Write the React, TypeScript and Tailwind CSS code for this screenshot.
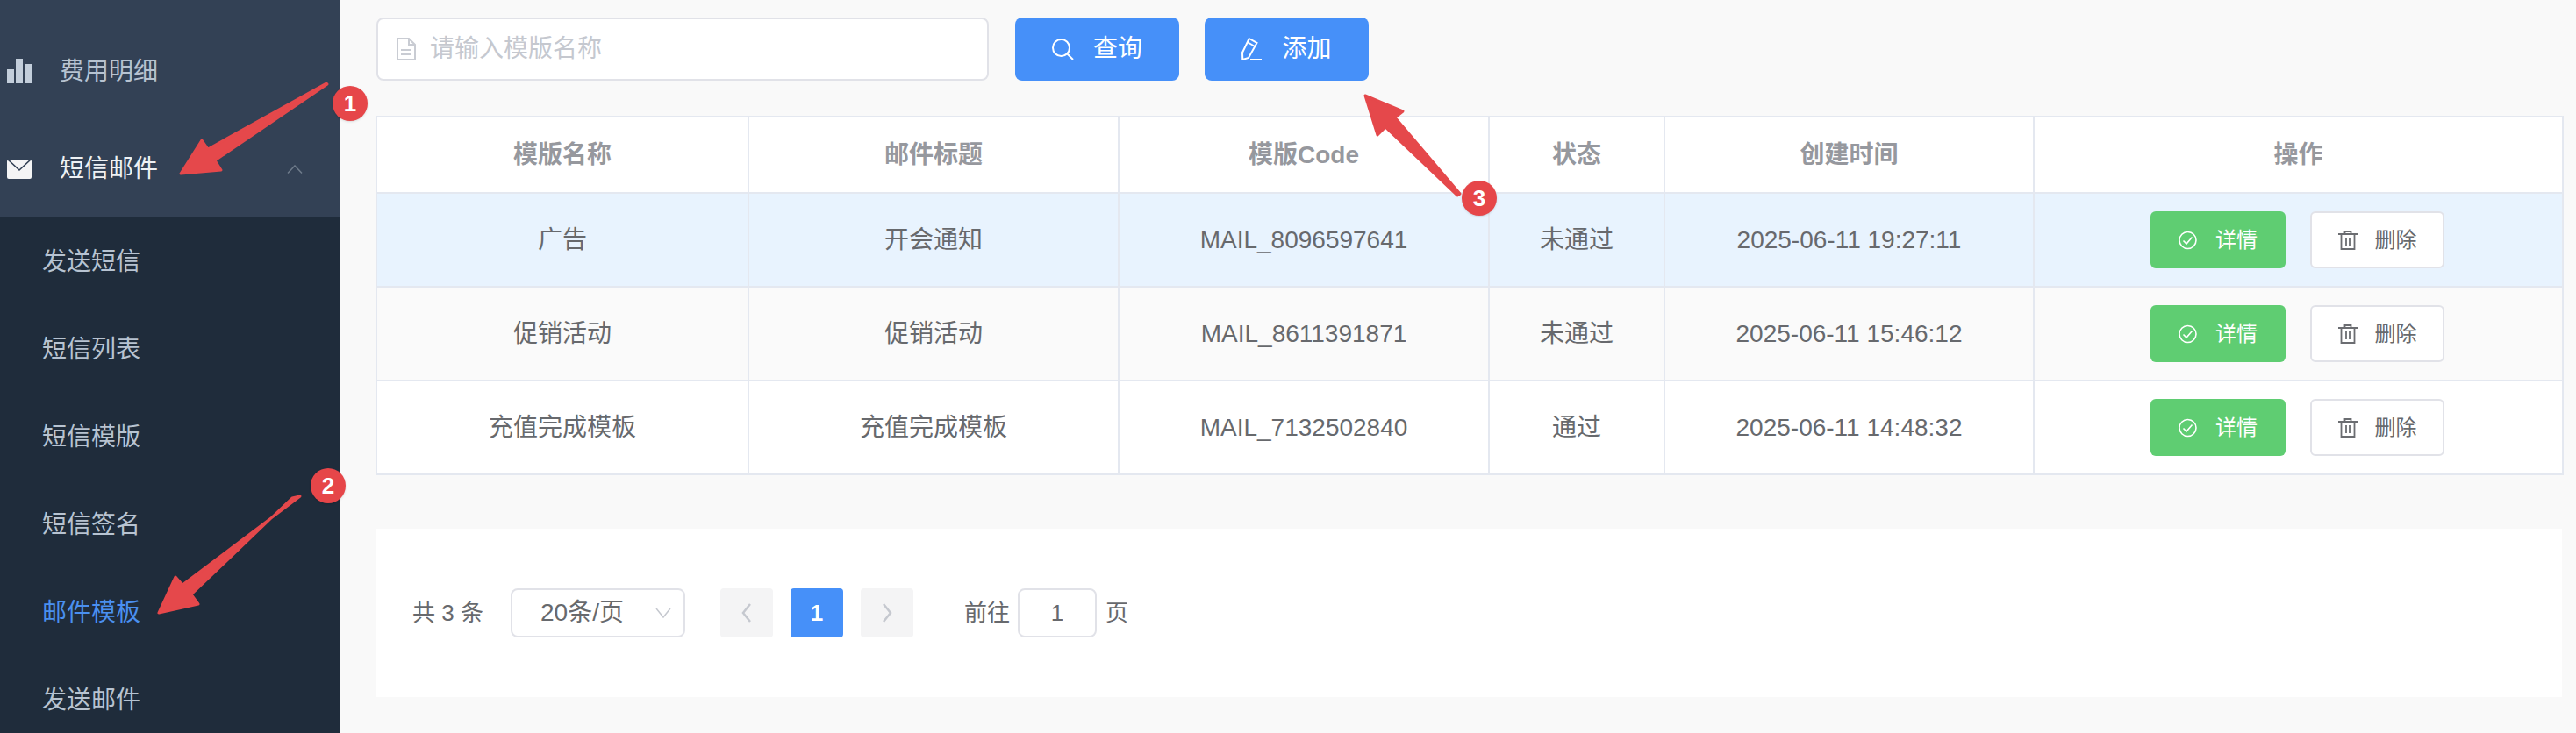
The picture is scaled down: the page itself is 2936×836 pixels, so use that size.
import React from 'react';

const FONT = 'font-["Liberation_Sans","Noto_Sans_CJK_SC",sans-serif]';

const SUB_MENU = ['发送短信', '短信列表', '短信模版', '短信签名', '邮件模板', '发送邮件'];

const ROWS = [
  { name: '广告', title: '开会通知', code: 'MAIL_8096597641', status: '未通过', time: '2025-06-11 19:27:11', bg: 'bg-[#e8f3fe]' },
  { name: '促销活动', title: '促销活动', code: 'MAIL_8611391871', status: '未通过', time: '2025-06-11 15:46:12', bg: 'bg-[#fafafa]' },
  { name: '充值完成模板', title: '充值完成模板', code: 'MAIL_7132502840', status: '通过', time: '2025-06-11 14:48:32', bg: 'bg-white' },
];

const HEADERS = ['模版名称', '邮件标题', '模版Code', '状态', '创建时间', '操作'];

const DocIcon = () => (
  <svg width="22" height="26" viewBox="0 0 22 26" fill="none" stroke="#c9ccd3" strokeWidth="2">
    <path d="M1 1h13l7 7v17H1z" />
    <path d="M14 1v7h7M5 14h12M5 19h12" />
  </svg>
);

const SearchIcon = () => (
  <svg width="25" height="25" viewBox="0 0 25 25" fill="none" stroke="#fff" strokeWidth="2">
    <circle cx="10.5" cy="10.5" r="9.5" />
    <path d="M17.5 17.5l6.5 6.5" />
  </svg>
);

const EditIcon = () => (
  <svg width="24" height="26" viewBox="0 0 24 26" fill="none" stroke="#fff" strokeWidth="2">
    <path d="M8.7 1l8.8 5-9.5 17-6.7 2-.3-8z" />
    <path d="M6.5 5l8.8 5" />
    <path d="M10 25h13" />
  </svg>
);

const CheckIcon = () => (
  <svg width="21" height="22" viewBox="0 0 21 22" fill="none" stroke="#fff" strokeWidth="1.6">
    <circle cx="10.5" cy="11" r="9.5" />
    <path d="M5.5 11.5l3.5 3.5 6.5-7.5" />
  </svg>
);

const TrashIcon = () => (
  <svg width="22" height="22" viewBox="0 0 22 22" fill="none" stroke="#6b6d71" strokeWidth="1.8">
    <path d="M0 4h22M7.5 4V1h7v3M3.5 4v17h15V4M9 8v9M13 8v9" />
  </svg>
);

const App = () => {
  return (
    <div className={`relative flex h-[836px] w-[2936px] overflow-hidden bg-[#f9f9f9] ${FONT}`}>
      {/* Sidebar */}
      <aside className="w-[388px] shrink-0 bg-[#1f2c3b]">
        <div className="bg-[#334155] pt-[25px]">
          <div className="flex h-[112px] items-center pl-2 text-[28px] text-[#b7c3d1]">
            <svg width="28" height="28" viewBox="0 0 28 28" fill="#c3cedb">
              <path d="M0 12h8v16H0zM10 0h8v28h-8zM20 6h8v22h-8z" />
            </svg>
            <span className="ml-[32px] pt-[2px]">费用明细</span>
          </div>
          <div className="flex h-[111px] items-center pl-2 text-[28px] text-[#eef1f4]">
            <svg width="28" height="22" viewBox="0 0 28 22">
              <rect width="28" height="22" rx="2" fill="#f4f4f5" />
              <path d="M1 0l13 12L27 0" fill="none" stroke="#334155" strokeWidth="1.6" />
            </svg>
            <span className="ml-[32px]">短信邮件</span>
            <svg className="ml-[auto] mr-[43px]" width="18" height="10" viewBox="0 0 18 10" fill="none" stroke="#6f7b8b" strokeWidth="1.5">
              <path d="M1 9.5l8-8.5 8 8.5" />
            </svg>
          </div>
        </div>
        {SUB_MENU.map(item => (
          <div
            key={item}
            className={`flex h-[100px] items-center pl-[48px] pt-[1px] text-[28px] ${item === '邮件模板' ? 'text-[#4a90f0]' : 'text-[#b7c3d1]'}`}
          >
            {item}
          </div>
        ))}
      </aside>

      {/* Main */}
      <main className="flex-1 pl-[41px] pr-4 pt-5">
        <div className="flex">
          <div className="flex h-[72px] w-[698px] items-center rounded-lg border-2 border-[#e1e2e8] bg-white pl-[21px]">
            <DocIcon />
            <span className="ml-[16px] text-[28px] text-[#c5c8cf]">请输入模版名称</span>
          </div>
          <button className="ml-[30px] flex h-[72px] w-[187px] items-center justify-center gap-[22px] rounded-lg bg-[#4690f9] text-[28px] text-white">
            <SearchIcon />
            <span>查询</span>
          </button>
          <button className="ml-[29px] flex h-[72px] w-[187px] items-center justify-center gap-[22px] rounded-lg bg-[#4690f9] text-[28px] text-white">
            <EditIcon />
            <span>添加</span>
          </button>
        </div>

        <table className="ml-[-1px] mt-[40px] w-[2492px] table-fixed border-collapse text-[28px] text-[#67696d]">
          <colgroup>
            <col className="w-[424px]" />
            <col className="w-[422px]" />
            <col className="w-[422px]" />
            <col className="w-[200px]" />
            <col className="w-[421px]" />
            <col className="w-[603px]" />
          </colgroup>
          <thead>
            <tr className="h-[87px] bg-white">
              {HEADERS.map(h => (
                <th key={h} className="border-2 border-[#e4e8f0] p-0 text-center font-bold text-[#96989e]">
                  {h}
                </th>
              ))}
            </tr>
          </thead>
          <tbody>
            {ROWS.map(row => (
              <tr key={row.code} className={`h-[107px] ${row.bg}`}>
                <td className="border-2 border-[#e4e8f0] p-0 text-center">{row.name}</td>
                <td className="border-2 border-[#e4e8f0] p-0 text-center">{row.title}</td>
                <td className="border-2 border-[#e4e8f0] p-0 text-center">{row.code}</td>
                <td className="border-2 border-[#e4e8f0] p-0 text-center">{row.status}</td>
                <td className="border-2 border-[#e4e8f0] p-0 text-center">{row.time}</td>
                <td className="border-2 border-[#e4e8f0] p-0">
                  <div className="flex justify-center gap-[28px] pr-[2px]">
                    <button className="flex h-[65px] w-[154px] items-center justify-center gap-[21px] rounded-md bg-[#5fcd72] text-2xl text-white">
                      <CheckIcon />
                      <span>详情</span>
                    </button>
                    <button className="flex h-[65px] w-[153px] items-center justify-center gap-[20px] rounded-md border-2 border-[#e1e2e8] bg-white text-2xl text-[#67696d]">
                      <TrashIcon />
                      <span>删除</span>
                    </button>
                  </div>
                </td>
              </tr>
            ))}
          </tbody>
        </table>

        {/* Pagination */}
        <div className="ml-[-1px] mt-[61px] flex h-[192px] w-[2492px] items-center bg-white pl-[42px] text-[26px] text-[#67696d]">
          <span className="w-[112px] whitespace-nowrap">共 3 条</span>
          <div className="flex h-[56px] w-[199px] items-center rounded-lg border-2 border-[#e1e2e8] pl-[32px] text-[28px]">
            <span className="whitespace-nowrap">20条/页</span>
            <svg className="ml-[auto] mr-[14px]" width="18" height="12" viewBox="0 0 18 12" fill="none" stroke="#c5c8cf" strokeWidth="1.5">
              <path d="M1 1l8 10 8-10" />
            </svg>
          </div>
          <div className="ml-10 flex h-[56px] w-[60px] items-center justify-center rounded bg-[#f4f4f5]">
            <svg width="12" height="22" viewBox="0 0 12 22" fill="none" stroke="#c5c8cf" strokeWidth="2.5">
              <path d="M10 1L2 11l8 10" />
            </svg>
          </div>
          <div className="ml-5 flex h-[56px] w-[60px] items-center justify-center rounded bg-[#4690f9] font-bold text-white">1</div>
          <div className="ml-5 flex h-[56px] w-[60px] items-center justify-center rounded bg-[#f4f4f5]">
            <svg width="12" height="22" viewBox="0 0 12 22" fill="none" stroke="#c5c8cf" strokeWidth="2.5">
              <path d="M2 1l8 10-8 10" />
            </svg>
          </div>
          <span className="ml-[58px] w-[61px] whitespace-nowrap">前往</span>
          <div className="flex h-[56px] w-[90px] items-center justify-center rounded-lg border-2 border-[#e1e2e8]">1</div>
          <span className="ml-[10px]">页</span>
        </div>
      </main>

      {/* Annotation arrows */}
      <svg className="absolute left-0 top-0" width="2936" height="836" fill="#e5484b" stroke="#e5484b" strokeWidth="3" strokeLinejoin="round">
        <path d="M372 95L237 170l-7-10-24 38 46-4-7-11 128-87z" />
        <path d="M342 566L208 667l-8-9-19 41 45-10-8-11 115-110z" />
        <path d="M1556 109l43 18-9 7 74 87-3 2-82-78-9 9z" />
      </svg>
      <div className="absolute left-[379px] top-[98px] flex size-10 items-center justify-center rounded-full bg-[#e64649] text-[26px] font-bold text-white shadow-sm">1</div>
      <div className="absolute left-[354px] top-[534px] flex size-10 items-center justify-center rounded-full bg-[#e64649] text-[26px] font-bold text-white shadow-sm">2</div>
      <div className="absolute left-[1666px] top-[206px] flex size-10 items-center justify-center rounded-full bg-[#e64649] text-[26px] font-bold text-white shadow-sm">3</div>
    </div>
  );
};

export default App;
